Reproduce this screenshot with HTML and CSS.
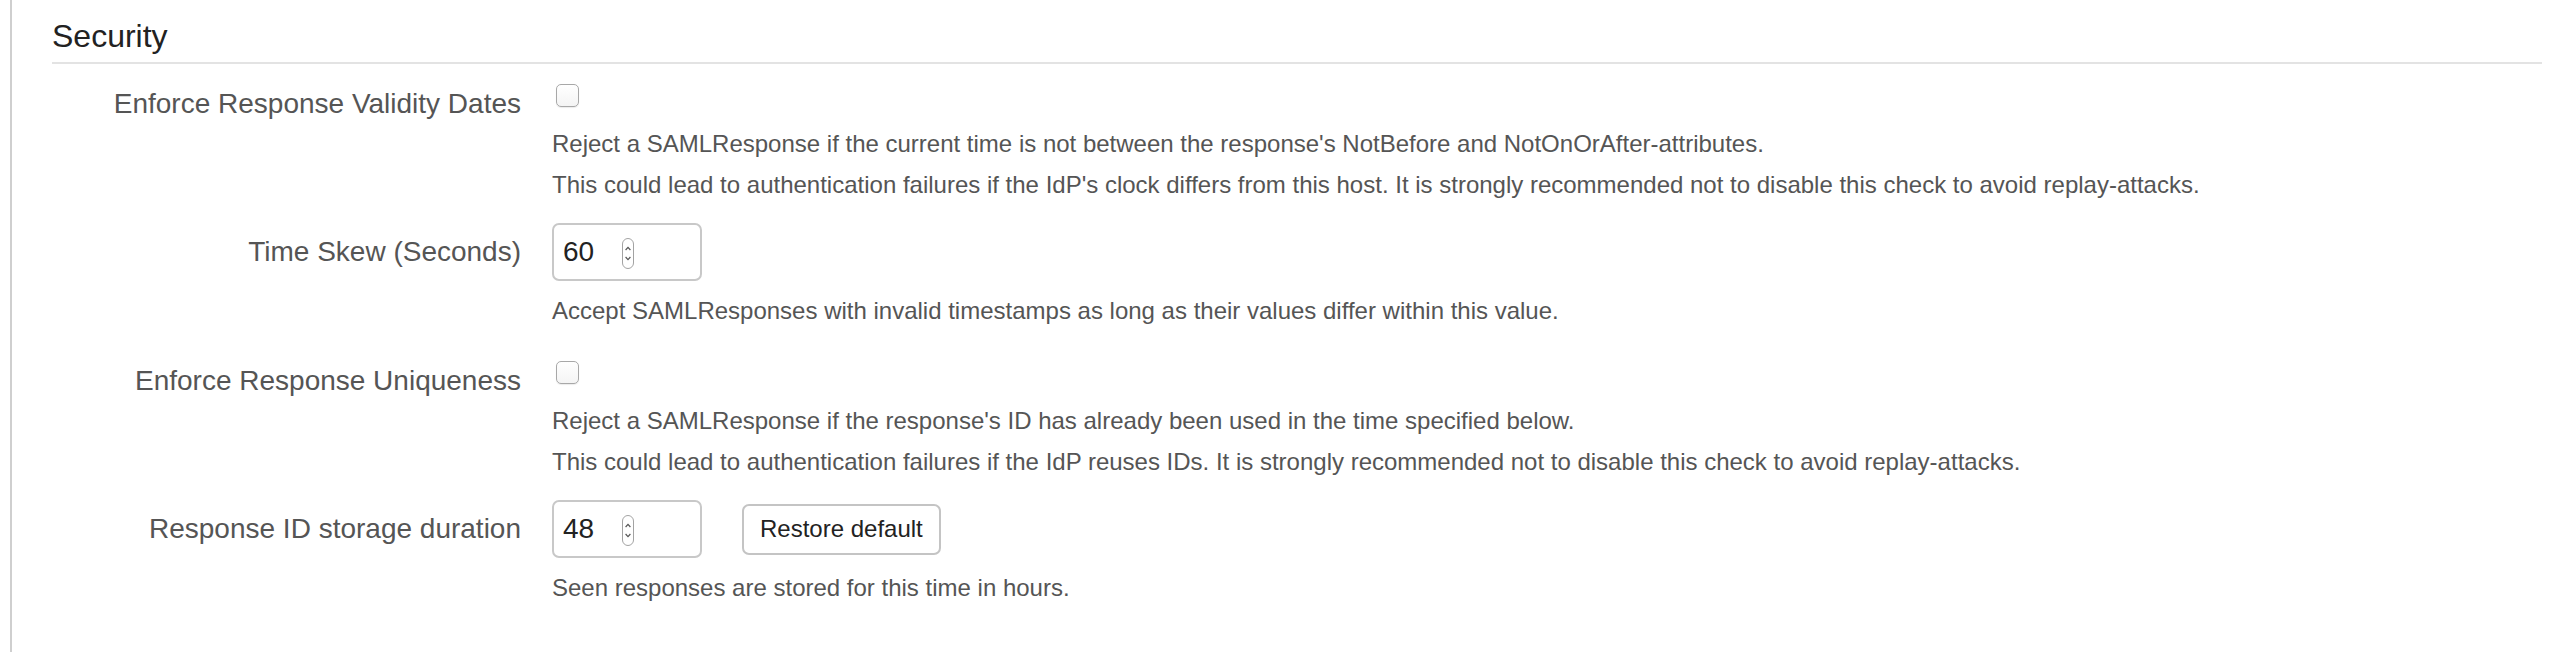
FILE: index.html
```html
<!DOCTYPE html>
<html lang="en">
<head>
    <meta charset="UTF-8">
    <meta name="viewport" content="width=device-width, initial-scale=1.0">
    <title>SAML Settings - Security</title>
    <link rel="stylesheet" href="styles.css">
</head>
<body>
    <div class="page">
        <h2 class="legend">Security</h2>

        <div class="form-group checkbox-group">
            <label class="control-label" for="enforce_validity">Enforce Response Validity Dates</label>
            <div class="controls">
                <input type="checkbox" id="enforce_validity" class="check">
                <p class="help">Reject a SAMLResponse if the current time is not between the response's NotBefore and NotOnOrAfter-attributes.</p>
                <p class="help">This could lead to authentication failures if the IdP's clock differs from this host. It is strongly recommended not to disable this check to avoid replay-attacks.</p>
            </div>
        </div>

        <div class="form-group">
            <label class="control-label input-label" for="time_skew">Time Skew (Seconds)</label>
            <div class="controls">
                <div class="field-row">
                    <div class="number-box">
                        <input type="text" id="time_skew" class="number-input" value="60">
                        <svg class="spinner" width="12" height="31" viewBox="0 0 12 31">
                            <rect x="0.5" y="0.5" width="11" height="30" rx="5.5" fill="#fff" stroke="#a3a3a3"/>
                            <polyline points="3.6,12 6,9.4 8.4,12" fill="none" stroke="#555" stroke-width="1.2"/>
                            <polyline points="3.6,19 6,21.6 8.4,19" fill="none" stroke="#555" stroke-width="1.2"/>
                        </svg>
                    </div>
                </div>
                <p class="help">Accept SAMLResponses with invalid timestamps as long as their values differ within this value.</p>
            </div>
        </div>

        <div class="form-group checkbox-group">
            <label class="control-label" for="enforce_unique">Enforce Response Uniqueness</label>
            <div class="controls">
                <input type="checkbox" id="enforce_unique" class="check">
                <p class="help">Reject a SAMLResponse if the response's ID has already been used in the time specified below.</p>
                <p class="help">This could lead to authentication failures if the IdP reuses IDs. It is strongly recommended not to disable this check to avoid replay-attacks.</p>
            </div>
        </div>

        <div class="form-group">
            <label class="control-label input-label" for="id_storage">Response ID storage duration</label>
            <div class="controls">
                <div class="field-row">
                    <div class="number-box">
                        <input type="text" id="id_storage" class="number-input" value="48">
                        <svg class="spinner" width="12" height="31" viewBox="0 0 12 31">
                            <rect x="0.5" y="0.5" width="11" height="30" rx="5.5" fill="#fff" stroke="#a3a3a3"/>
                            <polyline points="3.6,12 6,9.4 8.4,12" fill="none" stroke="#555" stroke-width="1.2"/>
                            <polyline points="3.6,19 6,21.6 8.4,19" fill="none" stroke="#555" stroke-width="1.2"/>
                        </svg>
                    </div>
                    <button type="button" class="btn">Restore default</button>
                </div>
                <p class="help">Seen responses are stored for this time in hours.</p>
            </div>
        </div>
    </div>
</body>
</html>
```

FILE: styles.css
```css
/* General styles */
body {
    font-family: "Liberation Sans", Arial, sans-serif;
    margin: 0;
    padding: 0;
    background-color: #fff;
    color: #555;
}

/* Content area with the sidebar edge on the left */
.page {
    margin-left: 10px;
    border-left: 2px solid #cfcfcf;
    padding: 0 26px 0 40px;
    min-height: 652px;
    box-sizing: border-box;
}

/* Section heading */
.legend {
    margin: 0 0 8px;
    padding: 18px 0 7px;
    font-size: 32px;
    line-height: 37px;
    font-weight: normal;
    color: #222;
    border-bottom: 2px solid #e3e3e3;
}

/* Form rows */
.form-group {
    display: grid;
    grid-template-columns: 469px 1fr;
    column-gap: 31px;
    margin-bottom: 21px;
}

.checkbox-group {
    padding-top: 12px;
}

.control-label {
    text-align: right;
    font-size: 28px;
    line-height: 40px;
    color: #555;
}

.input-label {
    padding-top: 9px;
}

/* Checkbox styling */
.check {
    display: block;
    appearance: none;
    -webkit-appearance: none;
    width: 23px;
    height: 23px;
    margin: 0 0 20px 4px;
    border: 1.5px solid #a8a8a8;
    border-radius: 5px;
    background: linear-gradient(#fff, #f4f4f4);
    box-shadow: 0 1px 1px rgba(0, 0, 0, 0.08);
    box-sizing: border-box;
}

/* Help text */
.help {
    margin: 0;
    font-size: 24px;
    line-height: 34px;
    color: #555;
}

.help + .help {
    margin-top: 7px;
}

/* Number field with spinner */
.field-row {
    display: flex;
    align-items: center;
    gap: 40px;
    margin-bottom: 13px;
}

.number-box {
    display: flex;
    align-items: center;
    width: 150px;
    height: 58px;
    padding: 0 9px;
    border: 2px solid #c8c8c8;
    border-radius: 7px;
    box-sizing: border-box;
    background: #fff;
}

.number-input {
    width: 59px;
    padding: 0;
    border: none;
    outline: none;
    font-family: "Liberation Sans", Arial, sans-serif;
    font-size: 28px;
    color: #222;
    background: transparent;
}

.spinner {
    display: block;
    margin-top: 2px;
}

/* Button styling */
.btn {
    height: 51px;
    padding: 0 16px;
    font-family: "Liberation Sans", Arial, sans-serif;
    font-size: 24px;
    color: #222;
    background-color: #fff;
    border: 2px solid #c4c4c4;
    border-radius: 7px;
    cursor: pointer;
}

.btn:hover {
    background-color: #f2f2f2;
}
```
